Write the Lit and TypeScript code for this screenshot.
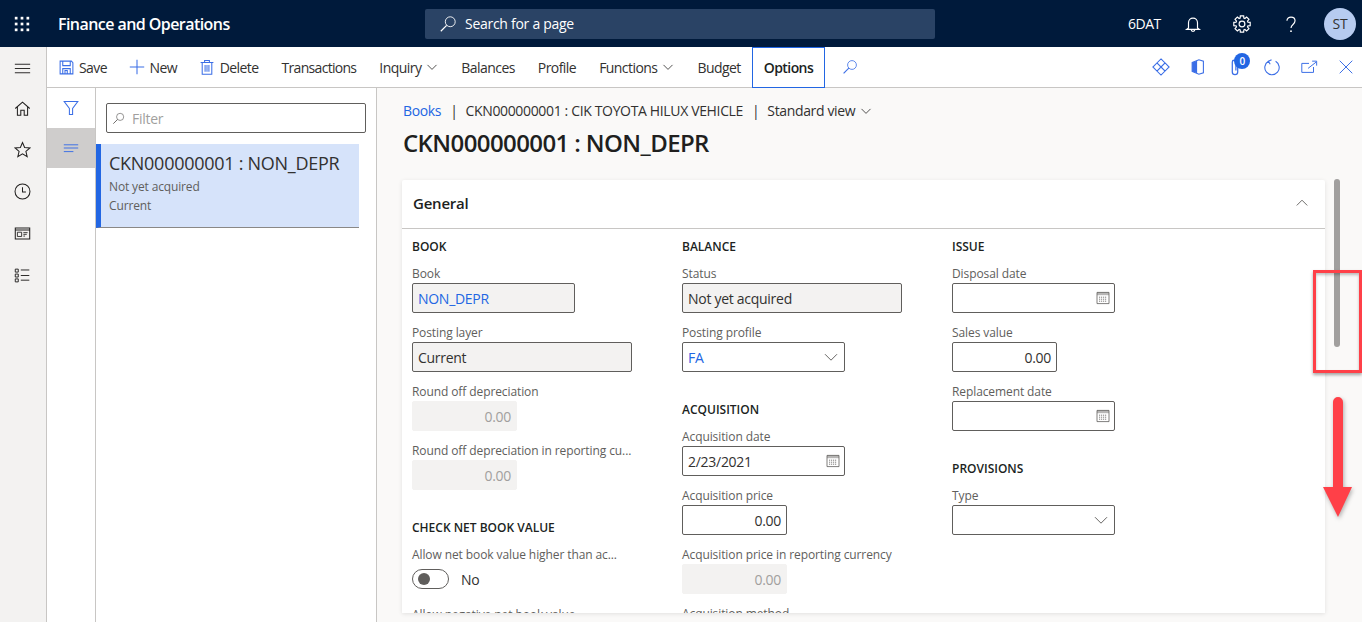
import { LitElement, html, css, svg } from "lit";
import { customElement } from "lit/decorators.js";

const icon = (size: number, body: unknown, cls = "") => html`<svg class="ico ${cls}" width=${size} height=${size} viewBox="0 0 20 20" fill="none" stroke="currentColor" stroke-width="1">${body}</svg>`;

// gear outline, 8 teeth
const gearPath = () => {
  const pts: string[] = [];
  for (let i = 0; i < 8; i++) {
    const a = (i * Math.PI) / 4;
    for (const [r, d] of [[6.9, -0.3], [9.3, -0.2], [9.3, 0.2], [6.9, 0.3]]) {
      pts.push(`${(10 + r * Math.sin(a + d)).toFixed(2)} ${(10 - r * Math.cos(a + d)).toFixed(2)}`);
    }
  }
  return `M${pts.join("L")}Z`;
};

const chevronDown = svg`<path d="M2.500 6.500 10 14l7.500-7.500"/>`;
const chevronUp = svg`<path d="M2.500 13.500 10 6l7.500 7.500"/>`;
const searchGlass = svg`<circle cx="12.500" cy="7.500" r="5.500"/><path d="M8.500 11.500 2 18" stroke-width="1.400"/>`;
const waffle = svg`<g fill="currentColor" stroke="none">${[2, 8.5, 15].map((y) => [2, 8.5, 15].map((x) => svg`<rect x=${x} y=${y} width="3" height="3"/>`))}</g>`;
const bell = svg`<path d="M5 14.500V8.500a5 5 0 0 1 10 0v6l2 1.500H3zM8 16.500c0 2.300 4 2.300 4 0" stroke-width="1.300"/>`;
const gear = svg`<circle cx="10" cy="10" r="3.200" stroke-width="1.300"/><path d=${gearPath()} stroke-width="1.300"/>`;
const question = svg`<path d="M5.500 6.500C5.500 1 14.500 1 14.500 6.500c0 4-4.500 4-4.500 8" stroke-width="1.300"/><circle cx="10" cy="18" r="1" fill="currentColor" stroke="none"/>`;
const save = svg`<path d="M1.500 1.500h15l2 2v15h-17zM5 1.500v6h10v-6M5 18.500v-7h10v7M8 14h3v4.500H8z" stroke-width="1.400"/>`;
const plus = svg`<path d="M10 1v18M1 10h18" stroke-width="1.300"/>`;
const trash = svg`<path d="M2 4.500h16M7 4.500V2h6v2.500M4 4.500V19h12V4.500M7.600 7.500v8.500M10 7.500v8.500M12.400 7.500v8.500" stroke-width="1.300"/>`;
const diamonds = svg`<path d="M10 1 14.500 5.500 10 10 5.500 5.500zM10 10 14.500 14.500 10 19 5.500 14.500zM5.500 5.500 10 10 5.500 14.500 1 10zM14.500 5.500 19 10 14.500 14.500 10 10z" stroke-width="1.200"/>`;
const office = svg`<path d="M3.500 5 11 2l5 1.600v12.800L11 18l-7.500-3z" stroke-width="1.200"/><path d="M3.500 5 9 3v14l-5.500-2z" fill="currentColor" stroke="none"/>`;
const clip = svg`<path d="M13 4v11.500a3 3 0 0 1-6 0V4.500a2 2 0 0 1 4 0V14" stroke-width="1.400"/>`;
const refresh = svg`<path d="M6 3.700a8 8 0 1 0 8 0M9.500 2 6 3.700 8 7" stroke-width="1.200"/>`;
const popout = svg`<path d="M10 6H2v10h13v-6M9 11.500l9-7M13.500 3.500h5v5" stroke-width="1.100"/>`;
const closeX = svg`<path d="M3 3l14 14M17 3 3 17" stroke-width="1.100"/>`;
const home = svg`<path d="M1.500 10 10 2.500l8.500 7.500M4 8v10h4v-6h4v6h4V8" stroke-width="1.200"/>`;
const star = svg`<path d="M10 1.800 12.500 7.600l6.300.5-4.800 4.100 1.500 6.200-5.500-3.300-5.500 3.300 1.500-6.200L1.200 8.100l6.300-.5z" stroke-width="1.200"/>`;
const clock = svg`<circle cx="10" cy="10" r="8.800" stroke-width="1.200"/><path d="M10 5v5.500h4" stroke-width="1.200"/>`;
const workspace = svg`<path d="M1.500 3.500h17v13h-17zM1.500 6h17" stroke-width="1.200"/><path d="M4 8.500h5v5H4zM11 9h5M11 11h4M11 13h2" stroke-width="1"/>`;
const listIco = svg`<path d="M1.500 2.500h3.500V6H1.500zM1.500 8.300h3.500v3.500H1.500zM1.500 14h3.500v3.500H1.500zM8 3.500h10M8 10h10M8 15.500h10" stroke-width="1.100"/>`;
const hamburger = svg`<path d="M1 5h18M1 10h18M1 15h18" stroke-width="1.100"/>`;
const funnel = svg`<path d="M1.500 2h17L12 10.500V18H8v-7.500z" stroke-width="1.300"/>`;
const leftLines = svg`<path d="M1 6h18M1 10h18M1 14.500h12" stroke-width="1.200"/>`;
const calendar = svg`<path d="M2.500 3h15v14h-15z" stroke-width="1"/><rect x="2.500" y="3" width="15" height="3.500" fill="currentColor" stroke="none" opacity=".45"/><path d="M5 9h10M5 11.500h10M5 14h10" stroke-width="1" stroke-dasharray="1.500 1"/>`;

@customElement("app-root")
export class AppRoot extends LitElement {
  static styles = css`
    :host {
      display: block;
      width: 1362px;
      height: 622px;
      overflow: hidden;
      position: relative;
      font-family: "Open Sans", "Noto Sans", sans-serif;
      letter-spacing: -0.02em;
      font-size: 14px;
      color: #323130;
      background: #faf9f8;
    }
    .ico {
      display: block;
      flex: none;
    }
    .nav {
      height: 47px;
      background: #001a3b;
      color: #fff;
      display: flex;
      align-items: center;
    }
    .waffle {
      margin-left: 13px;
    }
    .brand {
      margin-left: 27px;
      width: 367px;
      font-size: 16px;
      font-weight: 600;
      letter-spacing: -0.035em;
    }
    .navsearch {
      width: 510px;
      height: 30px;
      background: #2a4365;
      border-radius: 2px;
      display: flex;
      align-items: center;
      gap: 8px;
      padding-left: 14px;
      box-sizing: border-box;
    }
    .tenant {
      margin-left: 193px;
      width: 33px;
      letter-spacing: -0.035em;
    }
    .navicons {
      display: flex;
      align-items: center;
      margin-left: 23px;
      gap: 31px;
    }
    .avatar {
      width: 32px;
      height: 32px;
      border-radius: 50%;
      background: #b6cbf0;
      color: #323130;
      font-size: 14px;
      display: flex;
      align-items: center;
      justify-content: center;
      margin-left: 24px;
    }
    .shell {
      display: flex;
      height: 575px;
    }
    .rail {
      width: 46px;
      box-sizing: content-box;
      background: #f3f2f1;
      border-right: 1px solid #c8c6c4;
      display: flex;
      flex-direction: column;
      align-items: center;
      padding: 13px 0 0 0;
      gap: 24.75px;
      flex: none;
      color: #201f1e;
    }
    .rail .ico {
      margin-right: 2px;
    }
    .rail .first {
      margin-bottom: -2.25px;
    }
    .main {
      flex: 1;
      min-width: 0;
      display: flex;
      flex-direction: column;
    }
    .toolbar {
      height: 40px;
      background: #fff;
      border-bottom: 1px solid #c8c6c4;
      display: flex;
      align-items: center;
      padding-left: 1px;
      flex: none;
      letter-spacing: -0.04em;
    }
    .btn {
      display: flex;
      align-items: center;
      height: 40px;
      padding: 0 11.5px;
      gap: 5px;
      box-sizing: border-box;
      white-space: nowrap;
    }
    .btn.first {
      padding-left: 11px;
    }
    .btn.iconned {
      padding-left: 10px;
    }
    .btn.tight {
      letter-spacing: -0.05em;
    }
    .btn.find {
      padding-left: 17px;
    }
    .btn .ico {
      color: #3b6ee6;
    }
    .btn .chev {
      color: #323130;
      stroke-width: 1.4;
    }
    .btn.active {
      border: 1px solid #2266e3;
      padding: 0 10.5px;
      font-weight: 600;
      height: 41px;
      color: #201f1e;
    }
    .tools {
      margin-left: auto;
      display: flex;
      align-items: center;
      gap: 19px;
      padding-right: 7px;
      color: #3b6ee6;
      position: relative;
    }
    .clipwrap {
      position: relative;
    }
    .badge {
      position: absolute;
      top: -5px;
      left: 8px;
      width: 16px;
      height: 16px;
      border-radius: 50%;
      background: #2266e3;
      color: #fff;
      font-size: 10px;
      font-weight: 600;
      display: flex;
      align-items: center;
      justify-content: center;
    }
    .work {
      flex: 1;
      min-height: 0;
      display: flex;
    }
    .filterpane {
      width: 48px;
      background: #fff;
      border-right: 1px solid #c8c6c4;
      flex: none;
      color: #3b6ee6;
    }
    .fbtn {
      height: 40px;
      display: flex;
      align-items: center;
      justify-content: center;
    }
    .fbtn.sel {
      background: #cfcdcc;
    }
    .listpane {
      width: 280px;
      background: #fff;
      border-right: 1px solid #c8c6c4;
      flex: none;
    }
    .filter {
      margin: 15px 10px 11px 10px;
      height: 30px;
      border: 1px solid #605e5c;
      border-radius: 2px;
      box-sizing: border-box;
      display: flex;
      align-items: center;
      gap: 7px;
      padding-left: 5px;
      color: #a19f9e;
      letter-spacing: -0.02em;
    }
    .filter .ico {
      color: #605e5c;
    }
    .item {
      width: 263px;
      height: 84px;
      box-sizing: border-box;
      background: #d6e3fa;
      border-left: 5px solid #2266e3;
      border-bottom: 1px solid #8a8886;
      padding: 7px 0 0 8px;
    }
    .item-title {
      font-size: 18px;
      line-height: 25px;
      letter-spacing: -0.015em;
    }
    .item-sub {
      font-size: 12px;
      line-height: 19px;
      color: #605e5c;
      letter-spacing: -0.012em;
    }
    .item-sub.first {
      margin-top: 1px;
    }
    .content {
      flex: 1;
      min-width: 0;
      display: flex;
      flex-direction: column;
      padding: 13px 37px 9px 26px;
    }
    .crumbs {
      display: flex;
      align-items: center;
      height: 20px;
      line-height: 20px;
      white-space: nowrap;
      letter-spacing: -0.025em;
    }
    .crumbs .link {
      color: #2266e3;
    }
    .crumbs .sep {
      margin: 0 8px 0 9px;
    }
    .crumbs .ico {
      margin-left: 5px;
      stroke-width: 1.4;
    }
    .title {
      font-size: 24px;
      font-weight: 600;
      line-height: 32px;
      margin: 6px 0 0 0;
      color: #201f1e;
      letter-spacing: -0.025em;
    }
    .card {
      flex: 1;
      min-height: 0;
      margin: 21px 0 0 -1px;
      background: #fff;
      border-radius: 2px 2px 0 0;
      box-shadow: 0 1px 4px rgba(0, 0, 0, 0.1);
      overflow: hidden;
    }
    .card-head {
      height: 49px;
      box-sizing: border-box;
      border-bottom: 1px solid #c8c6c4;
      display: flex;
      align-items: center;
      justify-content: space-between;
      padding: 0 16px 2px 11px;
      font-size: 15px;
      font-weight: 600;
      color: #201f1e;
      letter-spacing: -0.015em;
    }
    .card-head .ico {
      color: #605e5c;
      stroke-width: 1.3;
    }
    .cols {
      display: grid;
      grid-template-columns: repeat(3, 270px);
      padding: 8px 0 0 10px;
    }
    h3 {
      margin: 0 0 6px 0;
      font-size: 12px;
      font-weight: 600;
      line-height: 20px;
      color: #201f1e;
      text-transform: uppercase;
      white-space: nowrap;
      letter-spacing: 0;
    }
    h3.next {
      margin-top: 28px;
      margin-bottom: 6px;
    }
    .field {
      margin-bottom: 9px;
    }
    label {
      display: block;
      height: 20px;
      line-height: 22px;
      font-size: 12px;
      color: #605e5c;
      white-space: nowrap;
      letter-spacing: -0.008em;
    }
    .input {
      height: 30px;
      box-sizing: border-box;
      border: 1px solid #605e5c;
      border-radius: 2px;
      padding: 0 5px;
      display: flex;
      align-items: center;
      justify-content: space-between;
      background: #fff;
      color: #323130;
    }
    .w-s {
      width: 105px;
    }
    .w-m {
      width: 163px;
    }
    .w-l {
      width: 220px;
    }
    .input.ro {
      background: #f3f2f1;
    }
    .input.num {
      justify-content: flex-end;
    }
    .input.off {
      background: #f3f2f1;
      border-color: #f3f2f1;
      color: #a19f9e;
      justify-content: flex-end;
    }
    .input .ico {
      color: #605e5c;
      stroke-width: 1.2;
    }
    .input.cal {
      padding-right: 3px;
    }
    .blue {
      color: #2266e3;
    }
    .toggle-row {
      display: flex;
      align-items: center;
      gap: 12px;
      margin-top: 4px;
    }
    .toggle-row span {
      padding-top: 2px;
    }
    .toggle {
      width: 37px;
      height: 20px;
      box-sizing: border-box;
      border: 1px solid #605e5c;
      border-radius: 10px;
      display: flex;
      align-items: center;
      padding-left: 5px;
    }
    .knob {
      width: 12px;
      height: 12px;
      border-radius: 50%;
      background: #605e5c;
    }
    .clipped {
      margin-top: 15px;
    }
    .scrollbar {
      position: absolute;
      left: 1334px;
      top: 179px;
      width: 6px;
      height: 168px;
      border-radius: 3px;
      background: #a19f9e;
    }
    .callout {
      position: absolute;
      left: 1313px;
      top: 270px;
      width: 49px;
      height: 103px;
      box-sizing: border-box;
      border: 3px solid #ff4048;
      box-shadow: 0 2px 3px rgba(0, 0, 0, 0.35), inset 0 2px 3px rgba(0, 0, 0, 0.25);
    }
    .arrow {
      position: absolute;
      left: 1320px;
      top: 395px;
      filter: drop-shadow(1px 2px 2px rgba(0, 0, 0, 0.3));
    }
  `;

  private field(name: string, value: unknown, cls: string) {
    return html`<div class="field"><label>${name}</label><div class="input ${cls}">${value}</div></div>`;
  }

  private calField(name: string, value = "") {
    return this.field(name, html`<span>${value}</span>${icon(16, calendar)}`, "w-m cal");
  }

  private comboField(name: string, value: unknown = "") {
    return this.field(name, html`<span>${value}</span>${icon(16, chevronDown)}`, "w-m");
  }

  render() {
    return html`
      <div class="nav">
        ${icon(18, waffle, "waffle")}
        <div class="brand">Finance and Operations</div>
        <div class="navsearch">${icon(18, searchGlass)}<span>Search for a page</span></div>
        <div class="tenant">6DAT</div>
        <div class="navicons">${icon(18, bell)}${icon(18, gear)}${icon(18, question)}</div>
        <div class="avatar">ST</div>
      </div>
      <div class="shell">
        <div class="rail">
          ${icon(17, hamburger, "first")}${icon(17, home)}${icon(17, star)}${icon(17, clock)}${icon(17, workspace)}${icon(17, listIco)}
        </div>
        <div class="main">
          <div class="toolbar">
            <div class="btn first">${icon(15, save)}Save</div>
            <div class="btn iconned">${icon(16, plus)}New</div>
            <div class="btn iconned">${icon(16, trash)}Delete</div>
            <div class="btn tight">Transactions</div>
            <div class="btn">Inquiry ${icon(12, chevronDown, "chev")}</div>
            <div class="btn">Balances</div>
            <div class="btn">Profile</div>
            <div class="btn">Functions ${icon(12, chevronDown, "chev")}</div>
            <div class="btn">Budget</div>
            <div class="btn active">Options</div>
            <div class="btn find">${icon(16, searchGlass)}</div>
            <div class="tools">
              ${icon(18, diamonds)}${icon(18, office)}
              <div class="clipwrap">${icon(18, clip)}<div class="badge">0</div></div>
              ${icon(18, refresh)}${icon(18, popout)}${icon(18, closeX)}
            </div>
          </div>
          <div class="work">
            <div class="filterpane">
              <div class="fbtn">${icon(16, funnel)}</div>
              <div class="fbtn sel">${icon(16, leftLines)}</div>
            </div>
            <div class="listpane">
              <div class="filter">${icon(13, searchGlass)}<span>Filter</span></div>
              <div class="item">
                <div class="item-title">CKN000000001 : NON_DEPR</div>
                <div class="item-sub first">Not yet acquired</div>
                <div class="item-sub">Current</div>
              </div>
            </div>
            <div class="content">
              <div class="crumbs">
                <span class="link">Books</span><span class="sep">|</span>
                <span>CKN000000001 : CIK TOYOTA HILUX VEHICLE</span><span class="sep">|</span>
                <span>Standard view</span>${icon(12, chevronDown)}
              </div>
              <h1 class="title">CKN000000001 : NON_DEPR</h1>
              <div class="card">
                <div class="card-head"><span>General</span>${icon(14, chevronUp)}</div>
                <div class="cols">
                  <div>
                    <h3>Book</h3>
                    ${this.field("Book", html`<span class="blue">NON_DEPR</span>`, "w-m ro")}
                    ${this.field("Posting layer", "Current", "w-l ro")}
                    ${this.field("Round off depreciation", "0.00", "w-s off")}
                    ${this.field("Round off depreciation in reporting cu...", "0.00", "w-s off")}
                    <h3 class="next">Check net book value</h3>
                    <label>Allow net book value higher than ac...</label>
                    <div class="toggle-row"><div class="toggle"><div class="knob"></div></div><span>No</span></div>
                    <label class="clipped">Allow negative net book value</label>
                  </div>
                  <div>
                    <h3>Balance</h3>
                    ${this.field("Status", "Not yet acquired", "w-l ro")}
                    ${this.comboField("Posting profile", html`<span class="blue">FA</span>`)}
                    <h3 class="next">Acquisition</h3>
                    ${this.calField("Acquisition date", "2/23/2021")}
                    ${this.field("Acquisition price", "0.00", "w-s num")}
                    ${this.field("Acquisition price in reporting currency", "0.00", "w-s off")}
                    <label>Acquisition method</label>
                  </div>
                  <div>
                    <h3>Issue</h3>
                    ${this.calField("Disposal date")}
                    ${this.field("Sales value", "0.00", "w-s num")}
                    ${this.calField("Replacement date")}
                    <h3 class="next">Provisions</h3>
                    ${this.comboField("Type")}
                  </div>
                </div>
              </div>
            </div>
          </div>
        </div>
      </div>
      <div class="scrollbar"></div>
      <div class="callout"></div>
      <svg class="arrow" width="34" height="124" viewBox="0 0 34 124">
        <path d="M13 7a5 5 0 0 1 10 0v85h9l-14 30L3 92h10z" fill="#ff4048"/>
      </svg>
    `;
  }
}
